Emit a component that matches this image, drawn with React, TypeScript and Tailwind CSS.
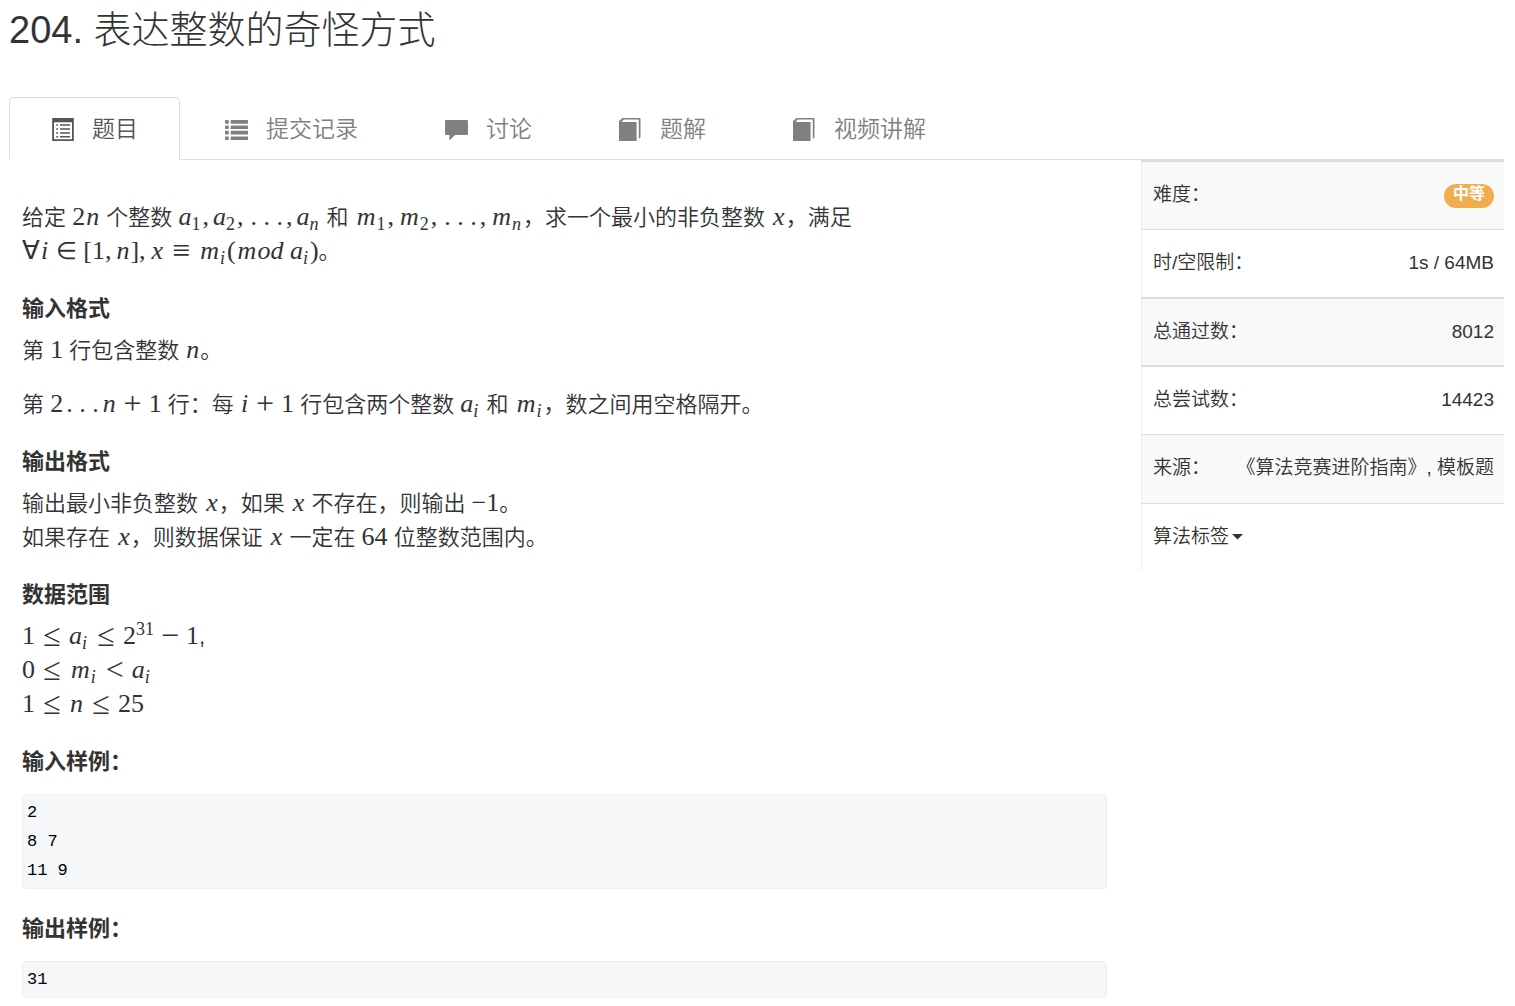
import type { ReactNode } from "react";

interface ChildrenProps {
  children: ReactNode;
}

/* ---------- icons ---------- */

const ListAltIcon = () => (
  <svg viewBox="0 0 23 23" className="h-[23px] w-[23px]" fill="currentColor" aria-hidden="true">
    <path
      fillRule="evenodd"
      d="M1.2 0h21.6v23H1.2zM3 4.2v17h18v-17z"
    />
    <path d="M5.3 6.2h1.8v1.5H5.3zM5.3 10.2h1.8v1.5H5.3zM5.3 14.2h1.8v1.5H5.3zM5.3 18.1h1.8v1.5H5.3z" />
    <path d="M9 6.2h10v1.5H9zM9 10.2h10v1.5H9zM9 14.2h10v1.5H9zM9 18.1h10v1.5H9z" />
  </svg>
);

const ListIcon = () => (
  <svg viewBox="0 0 23 23" className="h-[23px] w-[23px]" fill="currentColor" aria-hidden="true">
    <rect x="0" y="2" width="3.8" height="3.7" rx="0.8" />
    <rect x="0" y="7.4" width="3.8" height="3.7" rx="0.8" />
    <rect x="0" y="12.8" width="3.8" height="3.7" rx="0.8" />
    <rect x="0" y="18.4" width="3.8" height="3.7" rx="0.8" />
    <rect x="5.7" y="2" width="17.3" height="3.7" rx="0.6" />
    <rect x="5.7" y="7.4" width="17.3" height="3.7" rx="0.6" />
    <rect x="5.7" y="12.8" width="17.3" height="3.7" rx="0.6" />
    <rect x="5.7" y="18.4" width="17.3" height="3.7" rx="0.6" />
  </svg>
);

const CommentIcon = () => (
  <svg viewBox="0 0 23 23" className="h-[23px] w-[23px]" fill="currentColor" aria-hidden="true">
    <path d="M1.2 2h20.6Q23 2 23 3.2v12.6q0 1.2-1.2 1.2H10l-5.6 5.6V17H1.2Q0 17 0 15.8V3.2Q0 2 1.2 2z" />
  </svg>
);

const BookIcon = () => (
  <svg viewBox="0 0 23 23" className="h-[23px] w-[23px]" fill="currentColor" aria-hidden="true">
    <path d="M0 3.2L3.4 0H20.5q1 0 1 1v18.2l-1.7 1.8V1.5H4.6L2.6 4H17.6v19H0z" />
  </svg>
);

/* ---------- formula parts ---------- */

const Tex = ({ children }: ChildrenProps) => (
  <span className="font-['Liberation_Serif',serif] text-[26px] leading-none font-normal whitespace-nowrap">
    {children}
  </span>
);

// a variable; m and x stand a bit wider than n and i
const V = ({ children }: ChildrenProps) => (
  <i className={children === "m" || children === "x" ? "pr-px pl-[2px]" : "px-px"}>
    {children}
  </i>
);

const Sub = ({ children }: ChildrenProps) => (
  <sub className="pr-[2px] text-[18px] leading-none">{children}</sub>
);

const Rel = ({ children }: ChildrenProps) => (
  <span className="mx-[7px] inline-block w-5 text-center align-[-2px] text-[32px] leading-[26px]">
    {children}
  </span>
);

const Op = ({ children }: ChildrenProps) => (
  <span className="mx-[6px] inline-block w-5 text-center align-[-2px] text-[32px] leading-[26px]">
    {children}
  </span>
);

const Comma = () => <span className="pr-1">,</span>;

const Dots = () => <span className="px-[3px]">.&nbsp;.&nbsp;.</span>;

/* ---------- page parts ---------- */

const tabs = [
  { label: "题目", icon: <ListAltIcon />, active: true },
  { label: "提交记录", icon: <ListIcon /> },
  { label: "讨论", icon: <CommentIcon /> },
  { label: "题解", icon: <BookIcon /> },
  { label: "视频讲解", icon: <BookIcon /> },
];

const info = [
  {
    label: "难度：",
    value: (
      <span className="inline-block rounded-full bg-[#f0ad4e] px-[9px] pb-1 align-middle text-base leading-5 font-bold text-white">
        中等
      </span>
    ),
    thick: true,
  },
  { label: "时/空限制：", value: "1s / 64MB" },
  { label: "总通过数：", value: "8012", thick: true },
  { label: "总尝试数：", value: "14423", thick: true },
  { label: "来源：", value: "《算法竞赛进阶指南》, 模板题" },
];

const Heading = ({ children }: ChildrenProps) => (
  <h4 className="mt-7 mb-[13px] text-[22px] leading-6 font-bold">{children}</h4>
);

const Sample = ({ children }: ChildrenProps) => (
  <pre className="mt-5 rounded border border-[#eee] bg-[#f6f7f9] px-1 py-[3px] font-['Liberation_Mono',monospace] text-[17px] leading-[29px] font-normal text-black">
    {children}
  </pre>
);

const Tabs = () => (
  <nav className="flex gap-[3px] border-b border-[#ddd]">
    {tabs.map((tab) => (
      <a
        key={tab.label}
        href="#"
        className={`-mb-px flex h-[63px] items-center gap-[18px] rounded-t-[5px] border px-[41px] pt-[2px] text-[23px] font-[350] ${
          tab.active
            ? "border-[#ddd] border-b-white bg-white text-[#555]"
            : "border-transparent text-[#808080]"
        }`}
      >
        {tab.icon}
        {tab.label}
      </a>
    ))}
  </nav>
);

const InfoTable = () => (
  <table className="w-full table-fixed border-l border-[#eee] text-[19px] font-[350]">
    <tbody>
      {info.map((row) => (
        <tr
          key={row.label}
          className={`border-[#ddd] odd:bg-[#f9f9f9] ${row.thick ? "h-[68px] border-t-2" : "h-[69px] border-t"}`}
        >
          <th scope="row" className="w-[90px] pl-[11px] text-left font-[350] whitespace-nowrap">
            {row.label}
          </th>
          <td className="pr-[10px] text-right whitespace-nowrap">{row.value}</td>
        </tr>
      ))}
      <tr className="h-[68px] border-t border-[#ddd]">
        <td colSpan={2} className="pl-[11px]">
          <button type="button" className="flex items-center gap-[3px]">
            算法标签
            <svg viewBox="0 0 11 6" className="h-[6px] w-[11px]" fill="currentColor" aria-hidden="true">
              <path d="M0 0h11L5.5 5.5z" />
            </svg>
          </button>
        </td>
      </tr>
    </tbody>
  </table>
);

const Problem = () => (
  <article className="min-w-0 flex-1 pt-[41px] pr-[34px] pb-[9px] pl-[13px] text-[22px] leading-[34px] font-[350]">
    <p>
      给定 <Tex>2<V>n</V></Tex> 个整数{" "}
      <Tex>
        <i>a</i><Sub>1</Sub><Comma /><i>a</i><Sub>2</Sub><Comma /><Dots /><Comma />
        <i>a</i><Sub><i>n</i></Sub>
      </Tex>{" "}
      和{" "}
      <Tex>
        <V>m</V><Sub>1</Sub><Comma /><V>m</V><Sub>2</Sub><Comma /><Dots /><Comma />
        <V>m</V><Sub><i>n</i></Sub>
      </Tex>
      ，求一个最小的非负整数 <Tex><V>x</V></Tex>，满足{" "}
      <Tex>
        ∀<V>i</V>
        <span className="mx-[7px] inline-block w-5 text-center text-2xl leading-[26px]">∈</span>
        [1<Comma /><V>n</V>]<Comma /><V>x</V><Rel>≡</Rel>
        <V>m</V><Sub><i>i</i></Sub>(<V>m</V><i>od</i>&nbsp;<i>a</i><Sub><i>i</i></Sub>)
      </Tex>
      。
    </p>

    <Heading>输入格式</Heading>
    <p>
      第 <Tex>1</Tex> 行包含整数 <Tex><V>n</V></Tex>。
    </p>
    <p className="mt-5">
      第 <Tex>2<Dots /><V>n</V><Op>+</Op>1</Tex> 行：每{" "}
      <Tex><V>i</V><Op>+</Op>1</Tex> 行包含两个整数{" "}
      <Tex><i>a</i><Sub><i>i</i></Sub></Tex> 和{" "}
      <Tex><V>m</V><Sub><i>i</i></Sub></Tex>，数之间用空格隔开。
    </p>

    <Heading>输出格式</Heading>
    <p>
      输出最小非负整数 <Tex><V>x</V></Tex>，如果 <Tex><V>x</V></Tex>{" "}
      不存在，则输出 <Tex>−1</Tex>。
      <br />
      如果存在 <Tex><V>x</V></Tex>，则数据保证 <Tex><V>x</V></Tex> 一定在{" "}
      <Tex>64</Tex> 位整数范围内。
    </p>

    <Heading>数据范围</Heading>
    <p>
      <Tex>
        1<Rel>≤</Rel><i>a</i><Sub><i>i</i></Sub><Rel>≤</Rel>2
        <sup className="text-[18px] leading-none">31</sup><Op>−</Op>1
      </Tex>
      ,
      <br />
      <Tex>
        0<Rel>≤</Rel><V>m</V><Sub><i>i</i></Sub><Rel>&lt;</Rel><i>a</i><Sub><i>i</i></Sub>
      </Tex>
      <br />
      <Tex>
        1<Rel>≤</Rel><V>n</V><Rel>≤</Rel>25
      </Tex>
    </p>

    <Heading>输入样例：</Heading>
    <Sample>{"2\n8 7\n11 9"}</Sample>

    <Heading>输出样例：</Heading>
    <Sample>31</Sample>
  </article>
);

const App = () => (
  <div className="bg-white pr-[11px] pl-[9px] font-['Liberation_Sans','Noto_Sans_CJK_SC',sans-serif] text-[#333]">
    <h1 className="pt-[9px] pb-[46px] text-[38px] leading-[42px] font-light">
      204. 表达整数的奇怪方式
    </h1>
    <Tabs />
    <div className="flex items-start">
      <Problem />
      <aside className="w-[363px] shrink-0">
        <InfoTable />
      </aside>
    </div>
  </div>
);

export default App;
